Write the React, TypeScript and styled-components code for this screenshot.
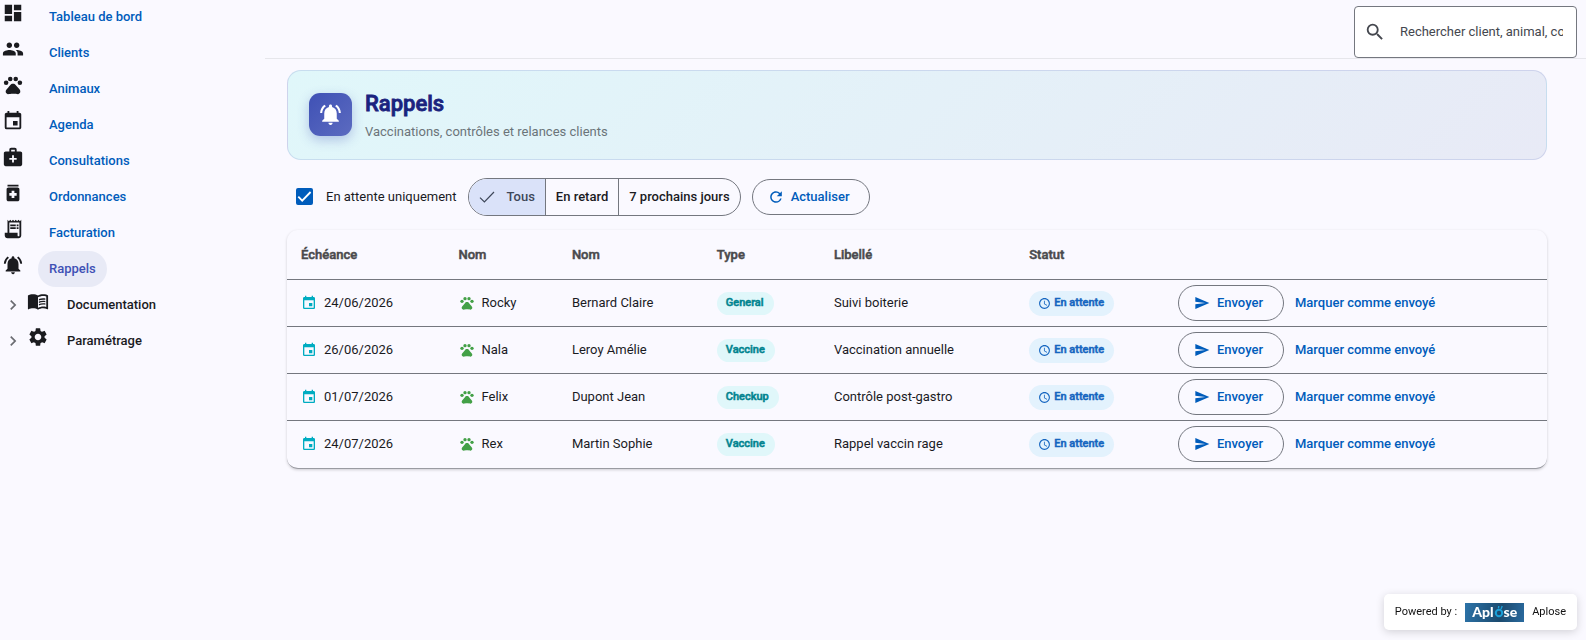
import React, { useState } from "react";
import styled, { createGlobalStyle, css } from "styled-components";
import {
  MdDashboard,
  MdPeople,
  MdPets,
  MdEvent,
  MdMedicalServices,
  MdMedication,
  MdReceiptLong,
  MdNotificationsActive,
  MdMenuBook,
  MdSettings,
  MdChevronRight,
  MdSearch,
  MdRefresh,
  MdSend,
  MdSchedule,
} from "react-icons/md";

const color = {
  page: "#faf9ff",
  ink: "#1a1b1f",
  muted: "#44474e",
  primary: "#005cbb",
  outline: "#74777f",
  indigo: "#3f51b5",
};

const GlobalStyle = createGlobalStyle`
  *, *::before, *::after { box-sizing: border-box; }
  body {
    margin: 0;
    background: ${color.page};
    color: ${color.ink};
    font-family: Roboto, "Liberation Sans", sans-serif;
    font-size: 13px;
    line-height: 20px;
  }
  button, input { font: inherit; color: inherit; }
  svg { display: block; flex: none; }
`;

const Shell = styled.div`
  display: flex;
  min-height: 100vh;
`;

/* ---------- Sidebar ---------- */

const Sidebar = styled.nav`
  flex: none;
  width: 265px;
`;

const NavList = styled.ul`
  list-style: none;
  margin: -1px 0 0;
  padding: 0;
`;

const NavRow = styled.li`
  display: flex;
  align-items: center;
  height: 36px;
`;

const NavIcon = styled.span`
  align-self: flex-start;
  padding: 3px 14px 0 2px;
  font-size: 22px;
`;

const NavLink = styled.a<{ $active?: boolean }>`
  display: flex;
  align-items: center;
  height: 36px;
  padding: 0 11px;
  border-radius: 18px;
  font-weight: 500;
  text-decoration: none;
  color: ${(p) => (p.$active ? color.indigo : color.primary)};
  background: ${(p) => (p.$active ? "#e8eaf6" : "transparent")};
`;

const NavToggle = styled.button`
  display: flex;
  align-items: center;
  height: 36px;
  padding: 0;
  border: 0;
  background: none;
  font-weight: 500;
  cursor: pointer;
`;

const Chevron = styled.span`
  padding: 0 2px 0 3px;
  font-size: 20px;
  color: #6b6c72;
`;

const ToggleIcon = styled(NavIcon)`
  padding-right: 18px;
`;

/* ---------- Main area ---------- */

const Main = styled.div`
  flex: 1;
  min-width: 0;
`;

const TopBar = styled.header`
  display: flex;
  justify-content: flex-end;
  padding: 6px 9px 0 0;
  height: 59px;
  border-bottom: 1px solid #e6e6eb;
`;

const SearchBox = styled.label`
  display: flex;
  align-items: center;
  gap: 14px;
  width: 223px;
  height: 52px;
  padding: 0 13px 0 9px;
  border: 1px solid ${color.outline};
  border-radius: 4px;
  background: #fff;
  color: ${color.muted};
  font-size: 22px;
`;

const SearchInput = styled.input`
  flex: 1;
  min-width: 0;
  padding: 0;
  border: 0;
  outline: 0;
  background: none;
  font-size: 13px;
  &::placeholder {
    color: ${color.muted};
    opacity: 1;
  }
`;

const Content = styled.main`
  padding: 11px 39px 24px 22px;
`;

const Hero = styled.section`
  display: flex;
  align-items: center;
  gap: 13px;
  min-height: 90px;
  padding: 16px 21px 17px;
  border: 1px solid rgba(63, 81, 181, 0.15);
  border-radius: 14px;
  background: linear-gradient(135deg, #e0f7fa 0%, #e8eaf6 100%);
`;

const HeroIcon = styled.span`
  display: grid;
  place-items: center;
  width: 43px;
  height: 43px;
  border-radius: 11px;
  color: #fff;
  font-size: 25px;
  background: linear-gradient(135deg, #3f51b5, #5c6bc0);
  box-shadow: 0 4px 12px rgba(63, 81, 181, 0.3);
`;

/* Medium weight thickened by a thin outline, used for headings and badges. */
const strong = css`
  font-weight: 500;
  -webkit-text-stroke: 0.5px currentColor;
`;

const HeroTitle = styled.h1`
  ${strong}
  margin: 2px 0 4px;
  font-size: 22px;
  line-height: 28px;
  -webkit-text-stroke-width: 0.8px;
  color: #1a237e;
`;

const HeroText = styled.p`
  margin: 0;
  color: #6b7479;
`;

const Filters = styled.div`
  display: flex;
  align-items: center;
  flex-wrap: wrap;
  gap: 11px;
  padding: 18px 0 14px 9px;
`;

const CheckLabel = styled.label`
  display: flex;
  align-items: center;
  gap: 13px;
`;

const CheckFrame = styled.span`
  display: grid;
  align-items: start;
  width: 17px;
  height: 18px;
  & > * {
    grid-area: 1 / 1;
  }
  & > svg {
    pointer-events: none;
  }
`;

const CheckInput = styled.input`
  appearance: none;
  width: 17px;
  height: 17px;
  margin: 0;
  border: 2px solid ${color.muted};
  border-radius: 2px;
  &:checked {
    border-color: ${color.primary};
    background: ${color.primary};
  }
`;

const Segments = styled.div`
  display: flex;
  height: 38px;
  border: 1px solid ${color.outline};
  border-radius: 19px;
  overflow: hidden;
`;

const Segment = styled.button<{ $on: boolean }>`
  display: flex;
  align-items: center;
  gap: 12px;
  padding: 0 10px;
  border: 0;
  background: ${(p) => (p.$on ? "#dae2f9" : "transparent")};
  color: ${(p) => (p.$on ? "#3e4759" : color.ink)};
  font-weight: 500;
  cursor: pointer;
  & + & {
    border-left: 1px solid ${color.outline};
  }
`;

const pill = css`
  display: flex;
  align-items: center;
  gap: 7px;
  height: 36px;
  border-radius: 18px;
  font-weight: 500;
  color: ${color.primary};
  background: none;
  cursor: pointer;
`;

const OutlineButton = styled.button`
  ${pill}
  padding: 0 20px 0 15px;
  border: 1px solid ${color.outline};
  & > svg {
    font-size: 16px;
  }
`;

const TextButton = styled.button`
  ${pill}
  padding: 0 11px;
  border: 0;
`;

/* ---------- Table ---------- */

const Card = styled.section`
  overflow: hidden;
  border-bottom: 1px solid #9a9ba2;
  border-radius: 11px;
  box-shadow: 0 1px 3px rgba(0, 0, 0, 0.18);
`;

const Table = styled.table`
  width: 100%;
  table-layout: fixed;
  border-collapse: separate;
  border-spacing: 0;
`;

const Th = styled.th`
  ${strong}
  height: 50px;
  padding: 0 14px;
  border-bottom: 1px solid ${color.outline};
  text-align: left;
  color: #4a4a4d;
`;

const Td = styled.td`
  height: 47px;
  padding: 0 14px;
  border-bottom: 1px solid ${color.outline};
  white-space: nowrap;
  tr:last-child > & {
    border-bottom-color: transparent;
  }
`;

const IconText = styled.span<{ $tint: string }>`
  display: flex;
  align-items: center;
  gap: 7px;
  & > svg {
    font-size: 16px;
    color: ${(p) => p.$tint};
  }
`;

const Badge = styled.span<{ $status?: boolean }>`
  ${strong}
  display: inline-flex;
  align-items: center;
  gap: 3px;
  height: ${(p) => (p.$status ? 25 : 23)}px;
  padding: 0 10px 0 9px;
  border-radius: 13px;
  font-size: 11px;
  color: ${(p) => (p.$status ? "#1565c0" : "#00838f")};
  background: ${(p) => (p.$status ? "#e3f2fd" : "#e0f7fa")};
  vertical-align: middle;
  & > svg {
    font-size: 13px;
  }
`;

const Actions = styled.div`
  display: flex;
  align-items: center;
`;

/* ---------- Powered-by tag ---------- */

const Powered = styled.a`
  position: fixed;
  right: 9px;
  bottom: 10px;
  display: flex;
  align-items: center;
  gap: 8px;
  height: 36px;
  padding: 0 11px;
  border-radius: 5px;
  background: #fff;
  box-shadow: 0 2px 8px rgba(0, 0, 0, 0.16);
  color: #111;
  font-size: 11px;
  text-decoration: none;
`;

const Logo = styled.span`
  display: flex;
  align-items: center;
  justify-content: center;
  width: 59px;
  height: 19px;
  background: linear-gradient(100deg, #2c73a8, #1b4a6e 60%, #2a6a9e);
  color: #fff;
  font-family: Lato, sans-serif;
  font-size: 14px;
  line-height: 18px;
  font-weight: 900;
`;

const links = [
  { label: "Tableau de bord", icon: <MdDashboard /> },
  { label: "Clients", icon: <MdPeople /> },
  { label: "Animaux", icon: <MdPets /> },
  { label: "Agenda", icon: <MdEvent /> },
  { label: "Consultations", icon: <MdMedicalServices /> },
  { label: "Ordonnances", icon: <MdMedication /> },
  { label: "Facturation", icon: <MdReceiptLong /> },
  { label: "Rappels", icon: <MdNotificationsActive />, active: true },
];

const groups = [
  { label: "Documentation", icon: <MdMenuBook /> },
  { label: "Paramétrage", icon: <MdSettings /> },
];

const columns = [
  { label: "Échéance", width: "12.5%" },
  { label: "Nom", width: "9%" },
  { label: "Nom", width: "11.5%" },
  { label: "Type", width: "9.3%" },
  { label: "Libellé", width: "15.5%" },
  { label: "Statut", width: "11.8%" },
  { label: "", width: "auto" },
];

const reminders = [
  ["24/06/2026", "Rocky", "Bernard Claire", "General", "Suivi boiterie"],
  ["26/06/2026", "Nala", "Leroy Amélie", "Vaccine", "Vaccination annuelle"],
  ["01/07/2026", "Felix", "Dupont Jean", "Checkup", "Contrôle post-gastro"],
  ["24/07/2026", "Rex", "Martin Sophie", "Vaccine", "Rappel vaccin rage"],
];

const ranges = ["Tous", "En retard", "7 prochains jours"];

export default function App() {
  const [pendingOnly, setPendingOnly] = useState(true);
  const [range, setRange] = useState("Tous");

  return (
    <Shell>
      <GlobalStyle />
      <Sidebar>
        <NavList>
          {links.map((l) => (
            <NavRow key={l.label}>
              <NavIcon>{l.icon}</NavIcon>
              <NavLink href="#" $active={l.active}>
                {l.label}
              </NavLink>
            </NavRow>
          ))}
          {groups.map((g) => (
            <NavRow key={g.label}>
              <NavToggle type="button" aria-expanded={false}>
                <Chevron>
                  <MdChevronRight />
                </Chevron>
                <ToggleIcon>{g.icon}</ToggleIcon>
                {g.label}
              </NavToggle>
            </NavRow>
          ))}
        </NavList>
      </Sidebar>

      <Main>
        <TopBar>
          <SearchBox>
            <MdSearch />
            <SearchInput
              type="text"
              aria-label="Rechercher"
              placeholder="Rechercher client, animal, consultation"
            />
          </SearchBox>
        </TopBar>

        <Content>
          <Hero>
            <HeroIcon>
              <MdNotificationsActive />
            </HeroIcon>
            <div>
              <HeroTitle>Rappels</HeroTitle>
              <HeroText>Vaccinations, contrôles et relances clients</HeroText>
            </div>
          </Hero>

          <Filters>
            <CheckLabel>
              <CheckFrame>
                <CheckInput
                  type="checkbox"
                  checked={pendingOnly}
                  onChange={(e) => setPendingOnly(e.target.checked)}
                />
                {pendingOnly && (
                  <svg width="17" height="17" viewBox="0 0 17 17" fill="none" stroke="#fff" strokeWidth="1.8">
                    <path d="M2.3 8.6 6.2 12.6 14.6 4" />
                  </svg>
                )}
              </CheckFrame>
              En attente uniquement
            </CheckLabel>
            <Segments role="group" aria-label="Période">
              {ranges.map((r) => (
                <Segment
                  key={r}
                  type="button"
                  $on={r === range}
                  aria-pressed={r === range}
                  onClick={() => setRange(r)}
                >
                  {r === range && (
                    <svg width="16" height="16" viewBox="0 0 16 16" fill="none" stroke="currentColor" strokeWidth="1.2">
                      <path d="M1 8.6 5.4 13 15 3" />
                    </svg>
                  )}
                  {r}
                </Segment>
              ))}
            </Segments>
            <OutlineButton type="button">
              <MdRefresh viewBox="1 1 22 22" />
              Actualiser
            </OutlineButton>
          </Filters>

          <Card>
            <Table>
              <colgroup>
                {columns.map((c, i) => (
                  <col key={i} style={{ width: c.width }} />
                ))}
              </colgroup>
              <thead>
                <tr>
                  {columns.map((c, i) => (
                    <Th key={i} scope="col">
                      {c.label}
                    </Th>
                  ))}
                </tr>
              </thead>
              <tbody>
                {reminders.map(([date, pet, owner, type, label]) => (
                  <tr key={pet}>
                    <Td>
                      <IconText $tint="#00acc1">
                        <MdEvent />
                        {date}
                      </IconText>
                    </Td>
                    <Td>
                      <IconText $tint="#43a047">
                        <MdPets />
                        {pet}
                      </IconText>
                    </Td>
                    <Td>{owner}</Td>
                    <Td>
                      <Badge>{type}</Badge>
                    </Td>
                    <Td>{label}</Td>
                    <Td>
                      <Badge $status>
                        <MdSchedule />
                        En attente
                      </Badge>
                    </Td>
                    <Td>
                      <Actions>
                        <OutlineButton type="button">
                          <MdSend />
                          Envoyer
                        </OutlineButton>
                        <TextButton type="button">Marquer comme envoyé</TextButton>
                      </Actions>
                    </Td>
                  </tr>
                ))}
              </tbody>
            </Table>
          </Card>
        </Content>
      </Main>

      <Powered href="#">
        <span>Powered by :</span>
        <Logo>
          Apl
          <svg width="10" height="18" viewBox="0 0 10 18" fill="none" stroke="#1ba0d8" strokeWidth="2">
            <circle cx="5" cy="10" r="3.2" />
            <path d="M4.4 5.4 4.8 3M7 6 8.2 3" strokeWidth="1.4" />
          </svg>
          se
        </Logo>
        <span>Aplose</span>
      </Powered>
    </Shell>
  );
}
